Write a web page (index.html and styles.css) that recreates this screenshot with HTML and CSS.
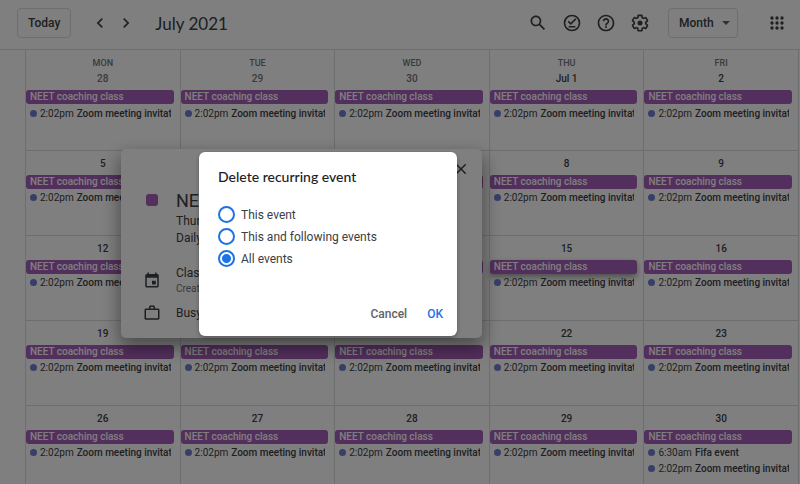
FILE: index.html
```html
<!DOCTYPE html>
<html lang="en">
<head>
    <meta charset="UTF-8">
    <meta name="viewport" content="width=device-width, initial-scale=1.0">
    <title>Calendar - July 2021</title>
    <link rel="stylesheet" href="styles.css">
</head>
<body>
    <header class="toolbar">
        <button class="outlined">Today</button>
        <div class="pager">
            <button class="icon-btn" aria-label="Previous month">
                <svg viewBox="0 0 24 24"><path d="M15.41 7.41L14 6l-6 6 6 6 1.41-1.41L10.83 12z"/></svg>
            </button>
            <button class="icon-btn" aria-label="Next month">
                <svg viewBox="0 0 24 24"><path d="M10 6L8.59 7.41 13.17 12l-4.58 4.59L10 18l6-6z"/></svg>
            </button>
        </div>
        <h1>July 2021</h1>

        <div class="tools">
            <button class="icon-btn" aria-label="Search">
                <svg viewBox="0 0 24 24"><path d="M20.49 19l-5.73-5.73C15.53 12.2 16 10.91 16 9.5 16 5.91 13.09 3 9.5 3S3 5.91 3 9.5 5.91 16 9.5 16c1.41 0 2.7-.47 3.77-1.24L19 20.49 20.49 19zM5 9.5C5 7.01 7.01 5 9.5 5S14 7.01 14 9.5 11.99 14 9.5 14 5 11.99 5 9.5z"/></svg>
            </button>
            <button class="icon-btn" aria-label="Tasks synced">
                <svg viewBox="0 0 24 24" class="line"><circle cx="12" cy="12" r="9"/><path d="M7.500 10l3 3L16.500 7M8 16.500h8"/></svg>
            </button>
            <button class="icon-btn" aria-label="Help">
                <svg viewBox="0 0 24 24"><path d="M11 18h2v-2h-2v2zm1-16C6.480 2 2 6.480 2 12s4.480 10 10 10 10-4.480 10-10S17.520 2 12 2zm0 18c-4.410 0-8-3.590-8-8s3.590-8 8-8 8 3.590 8 8-3.590 8-8 8zm0-14c-2.210 0-4 1.790-4 4h2c0-1.100.9-2 2-2s2 .9 2 2c0 2-3 1.750-3 5h2c0-2.250 3-2.500 3-5 0-2.210-1.790-4-4-4z"/></svg>
            </button>
            <button class="icon-btn" aria-label="Settings">
                <svg viewBox="0 0 24 24"><path d="M13.850 22.250h-3.700c-.740 0-1.360-.540-1.450-1.270l-.270-1.890c-.270-.140-.530-.290-.790-.460l-1.800.720c-.700.260-1.470-.030-1.810-.650L2.200 15.530c-.350-.660-.200-1.440.360-1.880l1.530-1.190c-.010-.150-.020-.300-.020-.460 0-.150.010-.310.020-.460l-1.520-1.190c-.590-.450-.740-1.260-.370-1.880l1.850-3.190c.340-.620 1.110-.9 1.790-.630l1.810.730c.260-.170.520-.320.780-.460l.270-1.910c.090-.7.710-1.250 1.440-1.250h3.700c.740 0 1.360.540 1.450 1.270l.270 1.890c.270.140.530.290.790.460l1.800-.720c.710-.260 1.480.030 1.820.650l1.840 3.180c.360.660.200 1.440-.360 1.880l-1.520 1.190c.010.150.020.300.020.460s-.010.310-.020.460l1.520 1.190c.560.450.720 1.230.370 1.860l-1.860 3.220c-.340.620-1.110.9-1.800.630l-1.800-.720c-.260.170-.520.320-.780.460l-.270 1.910c-.100.680-.720 1.220-1.460 1.220zm-3.230-2h2.760l.370-2.550.530-.220c.440-.180.880-.440 1.340-.780l.450-.340 2.380.960 1.380-2.400-2.030-1.580.070-.560c.030-.260.060-.510.060-.780s-.030-.530-.060-.780l-.070-.560 2.030-1.580-1.390-2.400-2.390.960-.450-.350c-.420-.320-.870-.580-1.330-.770l-.520-.220-.370-2.550h-2.760l-.370 2.550-.530.210c-.440.190-.880.440-1.340.790l-.450.330-2.380-.950-1.390 2.390 2.030 1.580-.070.560a7 7 0 0 0-.060.790c0 .260.020.530.060.780l.070.560-2.030 1.580 1.380 2.400 2.390-.960.450.350c.430.330.860.580 1.330.770l.530.220z"/><circle cx="12" cy="12" r="3"/></svg>
            </button>
        </div>
        <div class="view-picker">
            <select class="outlined" aria-label="View">
                <option>Day</option>
                <option>Week</option>
                <option selected>Month</option>
                <option>Year</option>
            </select>
        </div>
        <button class="icon-btn" aria-label="Apps">
            <svg viewBox="0 0 24 24">
                <circle cx="6" cy="6" r="2"/><circle cx="12" cy="6" r="2"/><circle cx="18" cy="6" r="2"/>
                <circle cx="6" cy="12" r="2"/><circle cx="12" cy="12" r="2"/><circle cx="18" cy="12" r="2"/>
                <circle cx="6" cy="18" r="2"/><circle cx="12" cy="18" r="2"/><circle cx="18" cy="18" r="2"/>
            </svg>
        </button>
    </header>

    <main>
        <table class="month">
            <thead>
                <tr>
                    <th>MON</th>
                    <th>TUE</th>
                    <th>WED</th>
                    <th>THU</th>
                    <th>FRI</th>
                </tr>
            </thead>
            <tbody id="weeks"></tbody>
        </table>
    </main>

    <!-- Event details -->
    <section class="details" aria-label="Event details">
        <button class="icon-btn close" aria-label="Close">
            <svg viewBox="0 0 24 24"><path d="M19 6.410L17.590 5 12 10.590 6.410 5 5 6.410 10.590 12 5 17.590 6.410 19 12 13.410 17.590 19 19 17.590 13.410 12z"/></svg>
        </button>
        <div class="details-row">
            <span class="swatch"></span>
            <div>
                <h2>NEET coaching class</h2>
                <p>Thursday, July 15</p>
                <p>Daily</p>
            </div>
        </div>
        <div class="details-row">
            <svg viewBox="0 0 24 24"><path d="M19 4h-1V2h-2v2H8V2H6v2H5a2 2 0 0 0-2 2v14c0 1.100.9 2 2 2h14c1.100 0 2-.9 2-2V6c0-1.100-.9-2-2-2zm0 16H5V9h14v11zm-7-7h5v5h-5z"/></svg>
            <div>
                <p>Classes</p>
                <p class="small">Created by: me</p>
            </div>
        </div>
        <div class="details-row">
            <svg viewBox="0 0 24 24"><path d="M20 6h-4V4c0-1.100-.9-2-2-2h-4c-1.100 0-2 .9-2 2v2H4c-1.100 0-2 .9-2 2v11c0 1.100.9 2 2 2h16c1.100 0 2-.9 2-2V8c0-1.100-.9-2-2-2zM10 4h4v2h-4V4zm10 15H4V8h16v11z"/></svg>
            <p>Busy</p>
        </div>
    </section>

    <div class="backdrop"></div>

    <form class="dialog" role="dialog" aria-labelledby="dialogTitle">
        <h2 id="dialogTitle">Delete recurring event</h2>
        <div class="options">
            <label><input type="radio" name="scope"> This event</label>
            <label><input type="radio" name="scope"> This and following events</label>
            <label><input type="radio" name="scope" checked> All events</label>
        </div>
        <div class="actions">
            <button type="button">Cancel</button>
            <button type="button" class="primary">OK</button>
        </div>
    </form>

    <script>
        const weeks = [
            ['28', '29', '30', 'Jul 1', '2'],
            ['5', '6', '7', '8', '9'],
            ['12', '13', '14', '15', '16'],
            ['19', '20', '21', '22', '23'],
            ['26', '27', '28', '29', '30']
        ];

        function timed(time, title) {
            return `<button class="timed"><span class="dot"></span><span>${time}</span><b>${title}</b></button>`;
        }

        document.getElementById('weeks').innerHTML = weeks.map((week, w) => {
            const days = week.map((day, d) => {
                const muted = w === 0 && d < 3 ? ' muted' : '';
                const active = w === 2 && d === 3 ? ' active' : '';
                const extra = w === 4 && d === 4 ? timed('6:30am', 'Fifa event') : '';
                return `<td>
                    <div class="date${muted}">${day}</div>
                    <button class="all-day${active}">NEET coaching class</button>
                    ${extra}${timed('2:02pm', 'Zoom meeting invitation')}
                </td>`;
            });
            return `<tr>${days.join('')}</tr>`;
        }).join('');
    </script>
</body>
</html>
```
FILE: styles.css
```css
* {
    box-sizing: border-box;
}
body {
    margin: 0;
    height: 100vh;
    overflow: hidden;
    position: relative;
    font-family: Roboto, Arial, sans-serif;
    font-size: 12px;
    color: #3c4043;
    background-color: #fff;
}
h1, h2, p {
    margin: 0;
    font-weight: 400;
}
button, select {
    font: inherit;
    color: inherit;
    background: none;
    border: none;
    padding: 0;
    cursor: pointer;
}
svg {
    display: block;
    width: 18px;
    height: 18px;
    fill: #3c4043;
}
svg.line {
    fill: none;
    stroke: #3c4043;
    stroke-width: 2;
}

/* Toolbar */
.toolbar {
    display: flex;
    align-items: center;
    height: 50px;
    padding: 0 6px 3px 17px;
    border-bottom: 1px solid #dadce0;
}
.toolbar h1 {
    margin-left: 16px;
    font-family: "Google Sans", Lato, sans-serif;
    font-size: 17px;
}
.outlined {
    height: 30px;
    padding: 0 10px;
    border: 1px solid #dadce0;
    border-radius: 4px;
    font-weight: 500;
}
.icon-btn {
    display: flex;
    align-items: center;
    justify-content: center;
    width: 34px;
    height: 34px;
}
.toolbar .icon-btn svg {
    width: 20px;
    height: 20px;
}
.pager {
    display: flex;
    margin-left: 16px;
}
.toolbar .pager .icon-btn {
    width: 26px;
}
.tools {
    display: flex;
    margin-left: auto;
    margin-right: 11px;
}
.view-picker {
    position: relative;
    margin-right: 22px;
}
.view-picker select {
    appearance: none;
    width: 70px;
}
.view-picker::after {
    content: "";
    position: absolute;
    right: 8px;
    top: 13px;
    border: 4px solid transparent;
    border-top-color: #5f6368;
    border-bottom: none;
    pointer-events: none;
}

/* Month grid */
main {
    padding: 0 1px 0 25px;
}
.month {
    width: 100%;
    table-layout: fixed;
    border-collapse: collapse;
}
.month th, .month td {
    padding: 0;
    border-left: 1px solid #dadce0;
    border-right: 1px solid #dadce0;
}
.month th {
    padding-top: 7px;
    font-size: 9px;
    font-weight: 500;
    line-height: 13px;
    color: #70757a;
}
.month td {
    height: 85px;
    padding-top: 5px;
    vertical-align: top;
    border-bottom: 1px solid #dadce0;
}
.month tr:first-child td {
    height: 80px;
    padding-top: 1px;
}
.date {
    font-size: 10px;
    font-weight: 500;
    line-height: 16px;
    margin-bottom: 3px;
    text-align: center;
}
.muted {
    color: #70757a;
}
.all-day {
    display: block;
    width: calc(100% - 6px);
    height: 14px;
    padding: 0 4px;
    border-radius: 3px;
    background-color: #a55eb8;
    color: #fff;
    font-size: 10px;
    font-weight: 500;
    line-height: 14px;
    text-align: left;
}
.all-day.active {
    box-shadow: 0 3px 6px rgba(0, 0, 0, .4);
}
.timed {
    display: flex;
    align-items: center;
    width: calc(100% - 9px);
    height: 16px;
    margin-top: 1px;
    padding-left: 4px;
    gap: 3px;
    overflow: hidden;
    font-size: 10px;
    white-space: nowrap;
}
.timed + .timed {
    margin-top: 0;
}
.timed b {
    font-weight: 500;
}
.dot {
    flex: none;
    width: 7px;
    height: 7px;
    border-radius: 50%;
    background-color: #6f7fd0;
}

/* Event details card */
.details {
    position: absolute;
    left: 121px;
    top: 149px;
    width: 361px;
    padding: 40px 22px 16px;
    border-radius: 5px;
    background-color: #fff;
    box-shadow: 0 8px 18px 2px rgba(0, 0, 0, .4);
}
.details .close {
    position: absolute;
    right: 4px;
    top: 3px;
}
.details-row {
    display: flex;
    align-items: center;
    gap: 15px;
    margin-bottom: 9px;
}
.details-row:first-of-type {
    align-items: flex-start;
    margin-bottom: 18px;
}
.details-row:last-child {
    margin-bottom: 0;
}
.details h2 {
    font-size: 18px;
    line-height: 24px;
}
.details p {
    line-height: 17px;
}
.details .small {
    font-size: 10px;
    line-height: 13px;
    color: #70757a;
}
.swatch {
    width: 12px;
    height: 12px;
    margin: 5px 3px 0;
    border-radius: 3px;
    background-color: #a55eb8;
}

.backdrop {
    position: absolute;
    inset: 0;
    background-color: rgba(0, 0, 0, .5);
}

/* Delete dialog */
.dialog {
    position: absolute;
    left: 199px;
    top: 152px;
    width: 258px;
    padding: 16px 14px 10px 19px;
    border-radius: 6px;
    background-color: #fff;
    box-shadow: 0 2px 4px rgba(0, 0, 0, .3);
}
.dialog h2 {
    font-family: "Google Sans", Lato, sans-serif;
    font-size: 14px;
    font-weight: 500;
    line-height: 18px;
    color: #202124;
}
.options {
    display: grid;
    gap: 5px;
    margin-top: 20px;
}
.options label {
    display: flex;
    align-items: center;
    gap: 6px;
    line-height: 16px;
}
.options input {
    appearance: none;
    width: 17px;
    height: 17px;
    margin: 0;
    border: 2px solid #1a73e8;
    border-radius: 50%;
}
.options input:checked {
    background: radial-gradient(circle, #1a73e8 4px, transparent 5px);
}
.actions {
    display: flex;
    justify-content: flex-end;
    gap: 20px;
    margin-top: 35px;
}
.actions button {
    height: 24px;
    font-weight: 500;
    color: #5f6368;
}
.actions .primary {
    color: #1a73e8;
}
```
